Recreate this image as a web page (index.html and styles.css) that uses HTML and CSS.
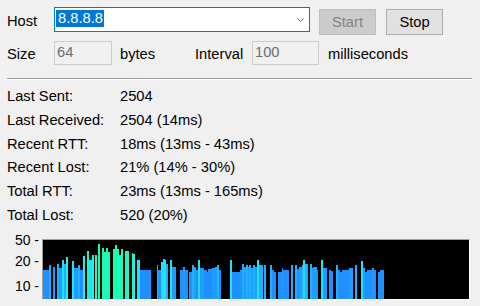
FILE: index.html
```html
<!DOCTYPE html>
<html lang="en">
<head>
    <meta charset="UTF-8">
    <meta name="viewport" content="width=device-width, initial-scale=1.0">
    <title>Ping Monitor</title>
    <link rel="stylesheet" href="styles.css">
</head>
<body>
    <div class="panel">
        <div class="row row-host">
            <label class="host-label">Host</label>
            <div class="combo">
                <span class="combo-text">8.8.8.8</span>
                <svg class="combo-arrow" width="7" height="5" viewBox="0 0 7 5">
                    <path d="M0.5 0.5 L3.5 3.5 L6.5 0.5" fill="none" stroke="#606060" stroke-width="1"/>
                </svg>
            </div>
            <button class="btn btn-start" disabled>Start</button>
            <button class="btn btn-stop">Stop</button>
        </div>

        <div class="row row-options">
            <label class="size-label">Size</label>
            <div class="input input-size">64</div>
            <span class="unit unit-bytes">bytes</span>
            <label class="interval-label">Interval</label>
            <div class="input input-interval">100</div>
            <span class="unit unit-ms">milliseconds</span>
        </div>

        <div class="separator"></div>

        <div class="stats">
            <div>Last Sent:</div><div>2504</div>
            <div>Last Received:</div><div>2504 (14ms)</div>
            <div>Recent RTT:</div><div>18ms (13ms - 43ms)</div>
            <div>Recent Lost:</div><div>21% (14% - 30%)</div>
            <div>Total RTT:</div><div>23ms (13ms - 165ms)</div>
            <div>Total Lost:</div><div>520 (20%)</div>
        </div>

        <div class="chart">
            <div class="axis">
                <span class="tick tick-50">50 -</span>
                <span class="tick tick-20">20 -</span>
                <span class="tick tick-10">10 -</span>
            </div>
            <div class="plot">
                <svg width="426" height="59" viewBox="0 0 426 59" shape-rendering="crispEdges">
                    <rect class="b0" x="0" y="30" width="6" height="29"/>
                    <rect class="b2" x="6" y="25" width="2" height="34"/>
                    <rect class="b1" x="10" y="27" width="2" height="32"/>
                    <rect class="b2" x="14" y="24" width="2" height="35"/>
                    <rect class="b1" x="16" y="28" width="3" height="31"/>
                    <rect class="b3" x="19" y="20" width="2" height="39"/>
                    <rect class="b2" x="21" y="24" width="2" height="35"/>
                    <rect class="b4" x="23" y="17" width="2" height="42"/>
                    <rect class="b3" x="29" y="21" width="2" height="38"/>
                    <rect class="b1" x="31" y="28" width="4" height="31"/>
                    <rect class="b2" x="35" y="25" width="2" height="34"/>
                    <rect class="b0" x="37" y="30" width="3" height="29"/>
                    <rect class="b4" x="40" y="16" width="2" height="43"/>
                    <rect class="b5" x="44" y="11" width="2" height="48"/>
                    <rect class="b3" x="46" y="20" width="3" height="39"/>
                    <rect class="b4" x="49" y="15" width="2" height="44"/>
                    <rect class="b4" x="52" y="15" width="2" height="44"/>
                    <rect class="b6" x="55" y="4" width="2" height="55"/>
                    <rect class="b6" x="59" y="8" width="2" height="51"/>
                    <rect class="b5" x="61" y="12" width="2" height="47"/>
                    <rect class="b6" x="63" y="8" width="2" height="51"/>
                    <rect class="b5" x="65" y="12" width="2" height="47"/>
                    <rect class="b6" x="70" y="9" width="2" height="50"/>
                    <rect class="b6" x="72" y="5" width="2" height="54"/>
                    <rect class="b6" x="74" y="9" width="2" height="50"/>
                    <rect class="b4" x="76" y="15" width="2" height="44"/>
                    <rect class="b6" x="78" y="9" width="2" height="50"/>
                    <rect class="b5" x="82" y="11" width="4" height="48"/>
                    <rect class="b5" x="89" y="13" width="1" height="46"/>
                    <rect class="b4" x="90" y="14" width="2" height="45"/>
                    <rect class="b3" x="94" y="20" width="3" height="39"/>
                    <rect class="b0" x="97" y="30" width="11" height="29"/>
                    <rect class="b2" x="114" y="25" width="1" height="34"/>
                    <rect class="b0" x="115" y="30" width="3" height="29"/>
                    <rect class="b3" x="118" y="22" width="2" height="37"/>
                    <rect class="b3" x="120" y="19" width="2" height="40"/>
                    <rect class="b3" x="122" y="20" width="1" height="39"/>
                    <rect class="b2" x="123" y="24" width="2" height="35"/>
                    <rect class="b3" x="127" y="20" width="2" height="39"/>
                    <rect class="b1" x="129" y="27" width="4" height="32"/>
                    <rect class="b0" x="137" y="30" width="3" height="29"/>
                    <rect class="b1" x="140" y="27" width="2" height="32"/>
                    <rect class="b0" x="142" y="30" width="3" height="29"/>
                    <rect class="b0" x="146" y="32" width="3" height="27"/>
                    <rect class="b2" x="149" y="25" width="2" height="34"/>
                    <rect class="b1" x="151" y="27" width="2" height="32"/>
                    <rect class="b0" x="153" y="30" width="2" height="29"/>
                    <rect class="b3" x="155" y="20" width="2" height="39"/>
                    <rect class="b1" x="157" y="28" width="4" height="31"/>
                    <rect class="b0" x="161" y="30" width="3" height="29"/>
                    <rect class="b0" x="164" y="32" width="1" height="27"/>
                    <rect class="b0" x="165" y="29" width="4" height="30"/>
                    <rect class="b1" x="169" y="28" width="3" height="31"/>
                    <rect class="b1" x="172" y="27" width="2" height="32"/>
                    <rect class="b2" x="174" y="25" width="2" height="34"/>
                    <rect class="b0" x="176" y="30" width="2" height="29"/>
                    <rect class="b3" x="187" y="20" width="2" height="39"/>
                    <rect class="b0" x="189" y="32" width="8" height="27"/>
                    <rect class="b0" x="197" y="30" width="2" height="29"/>
                    <rect class="b2" x="199" y="24" width="2" height="35"/>
                    <rect class="b1" x="201" y="27" width="2" height="32"/>
                    <rect class="b2" x="203" y="25" width="2" height="34"/>
                    <rect class="b1" x="205" y="27" width="1" height="32"/>
                    <rect class="b2" x="206" y="25" width="2" height="34"/>
                    <rect class="b1" x="208" y="28" width="2" height="31"/>
                    <rect class="b2" x="210" y="25" width="2" height="34"/>
                    <rect class="b1" x="212" y="27" width="2" height="32"/>
                    <rect class="b3" x="214" y="20" width="2" height="39"/>
                    <rect class="b2" x="216" y="25" width="4" height="34"/>
                    <rect class="b2" x="221" y="25" width="2" height="34"/>
                    <rect class="b2" x="227" y="25" width="2" height="34"/>
                    <rect class="b0" x="229" y="30" width="2" height="29"/>
                    <rect class="b0" x="231" y="32" width="2" height="27"/>
                    <rect class="b0" x="235" y="32" width="4" height="27"/>
                    <rect class="b1" x="239" y="28" width="1" height="31"/>
                    <rect class="b0" x="240" y="30" width="6" height="29"/>
                    <rect class="b2" x="248" y="25" width="2" height="34"/>
                    <rect class="b2" x="252" y="25" width="2" height="34"/>
                    <rect class="b0" x="254" y="29" width="2" height="30"/>
                    <rect class="b1" x="256" y="27" width="3" height="32"/>
                    <rect class="b2" x="259" y="25" width="1" height="34"/>
                    <rect class="b3" x="260" y="20" width="2" height="39"/>
                    <rect class="b2" x="262" y="24" width="3" height="35"/>
                    <rect class="b2" x="267" y="24" width="2" height="35"/>
                    <rect class="b1" x="269" y="28" width="1" height="31"/>
                    <rect class="b1" x="270" y="27" width="4" height="32"/>
                    <rect class="b0" x="274" y="30" width="1" height="29"/>
                    <rect class="b3" x="278" y="20" width="2" height="39"/>
                    <rect class="b1" x="280" y="28" width="4" height="31"/>
                    <rect class="b0" x="286" y="30" width="2" height="29"/>
                    <rect class="b0" x="288" y="31" width="2" height="28"/>
                    <rect class="b2" x="293" y="25" width="2" height="34"/>
                    <rect class="b0" x="295" y="30" width="2" height="29"/>
                    <rect class="b0" x="297" y="32" width="2" height="27"/>
                    <rect class="b0" x="299" y="30" width="7" height="29"/>
                    <rect class="b1" x="306" y="28" width="4" height="31"/>
                    <rect class="b2" x="312" y="25" width="2" height="34"/>
                    <rect class="b3" x="318" y="21" width="2" height="38"/>
                    <rect class="b1" x="320" y="28" width="2" height="31"/>
                    <rect class="b0" x="322" y="32" width="2" height="27"/>
                    <rect class="b0" x="324" y="30" width="5" height="29"/>
                    <rect class="b1" x="329" y="28" width="2" height="31"/>
                    <rect class="b0" x="331" y="30" width="2" height="29"/>
                    <rect class="b0" x="335" y="32" width="2" height="27"/>
                    <rect class="b0" x="337" y="30" width="4" height="29"/>
                </svg>
            </div>
        </div>
    </div>
</body>
</html>
```

FILE: styles.css
```css
body {
    margin: 0;
    background: #f0f0f0;
    font-family: 'Liberation Sans', Arial, sans-serif;
    font-size: 14.7px;
    color: #000;
}

.panel {
    padding: 7px 8px 0 7px;
}

.row {
    display: flex;
    align-items: flex-start;
}

.row-host {
    height: 28px;
}

.host-label {
    width: 47px;
    padding-top: 2px;
    line-height: 25px;
}

.combo {
    box-sizing: border-box;
    width: 256px;
    height: 25px;
    border: 1px solid #0078d7;
    background: #fff;
    display: flex;
    align-items: flex-start;
    padding: 2px 0 0 1px;
}

.combo-text {
    background: #0078d7;
    color: #fff;
    line-height: 17px;
    padding: 0 1px 0 2px;
}

.combo-arrow {
    display: block;
    margin: 8px 5px 0 auto;
}

.btn {
    box-sizing: border-box;
    width: 57px;
    height: 26px;
    margin: 2px 0 0 9px;
    padding: 0;
    font: inherit;
    color: #000;
    background: #e1e1e1;
    border: 1px solid #adadad;
}

.btn-stop {
    margin-left: 10px;
}

.btn:disabled {
    background: #cccccc;
    border-color: #bfbfbf;
    color: #838383;
}

.row-options {
    margin-top: 6px;
    line-height: 24px;
}

.size-label {
    width: 47px;
    padding-top: 1px;
}

.input {
    box-sizing: border-box;
    height: 24px;
    border: 1px solid #cccccc;
    background: #f0f0f0;
    color: #6d6d6d;
    padding-left: 2px;
    line-height: 20px;
}

.input-size {
    width: 58px;
}

.input-interval {
    width: 67px;
}

.unit, .interval-label {
    padding-top: 1px;
}

.unit-bytes {
    width: 75px;
    margin-left: 8px;
}

.interval-label {
    width: 57px;
}

.unit-ms {
    margin-left: 9px;
}

.separator {
    margin-top: 12px;
    border-top: 1px solid #a0a0a0;
    border-bottom: 1px solid #fff;
}

.stats {
    margin-top: 5px;
    display: grid;
    grid-template-columns: 113px 1fr;
    line-height: 23.8px;
}

.chart {
    margin-top: 11px;
    display: flex;
}

.axis {
    position: relative;
    width: 35px;
    font-size: 14px;
}

.tick {
    position: absolute;
    right: 3px;
    line-height: 14px;
    white-space: nowrap;
}

.tick-50 { top: -6px; }
.tick-20 { top: 15px; }
.tick-10 { top: 40px; }

.plot {
    border-top: 1px solid #a0a0a0;
    border-left: 1px solid #a0a0a0;
    border-right: 1px solid #fff;
    border-bottom: 1px solid #fff;
    background: #000;
}

.plot svg {
    display: block;
}

.b0 { fill: #1e90ff; }
.b1 { fill: #1f9cff; }
.b2 { fill: #20b0ff; }
.b3 { fill: #1fe2f8; }
.b4 { fill: #1ef2e0; }
.b5 { fill: #1cf8c4; }
.b6 { fill: #16fea8; }
```
